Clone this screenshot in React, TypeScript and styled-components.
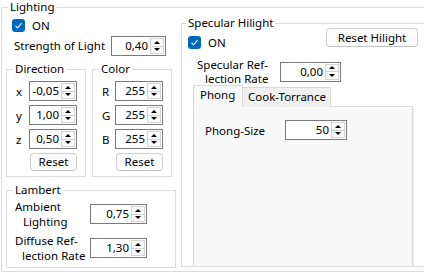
import React from 'react'
import styled, { createGlobalStyle } from 'styled-components'

const GlobalStyle = createGlobalStyle`
  html, body {
    margin: 0;
    padding: 0;
    background: #fff;
    overflow: hidden;
  }
  body {
    font-family: "Segoe UI", "Noto Sans", sans-serif;
    font-size: 11.5px;
    line-height: 15px;
    color: #000;
  }
`

const GroupBox = styled.fieldset<{ $w?: number; $h: number }>`
  box-sizing: border-box;
  margin: 0;
  padding: 0;
  min-width: 0;
  border: 1px solid #dcdcdc;
  width: ${p => (p.$w ? `${p.$w}px` : 'auto')};
  height: ${p => p.$h}px;
`

const Legend = styled.legend<{ $indent?: number }>`
  margin-left: ${p => p.$indent ?? 6}px;
  padding: 0 2px;
  height: 14px;
  line-height: 14px;
`

const Outer = styled(GroupBox)`
  margin-left: 1px;
`

const OuterBody = styled.div`
  display: grid;
  grid-template-columns: 170px 1fr;
  column-gap: 5px;
  padding: 0 2px 0 4px;
`

const LeftCol = styled.div`
  display: flex;
  flex-direction: column;
`

const CheckRow = styled.label<{ $top: number; $left: number }>`
  display: flex;
  align-items: center;
  gap: 7px;
  height: 15px;
  margin-top: ${p => p.$top}px;
  margin-left: ${p => p.$left}px;
`

const CheckMark = styled.span`
  display: inline-flex;
  align-items: center;
  justify-content: center;
  width: 13px;
  height: 13px;
  border-radius: 3px;
  background: #0067c0;
`

const FieldRow = styled.div<{ $cols: string; $top: number; $left: number }>`
  display: grid;
  grid-template-columns: ${p => p.$cols};
  align-items: center;
  margin-top: ${p => p.$top}px;
  padding-left: ${p => p.$left}px;
`

const Caption = styled.span<{ $dy?: number }>`
  white-space: nowrap;
  margin-top: ${p => p.$dy ?? 0}px;
`

const TwoLine = styled.span<{ $lh?: number; $dy?: number }>`
  display: flex;
  flex-direction: column;
  line-height: ${p => p.$lh ?? 15}px;
  margin-top: ${p => p.$dy ?? 0}px;
  white-space: nowrap;
`

const Line = styled.span<{ $indent?: number }>`
  padding-left: ${p => p.$indent ?? 0}px;
`

const Pair = styled.div`
  display: flex;
  gap: 6px;
  margin-top: 6px;
`

const AxisGrid = styled.div`
  display: grid;
  grid-template-columns: 13px 48px;
  row-gap: 4px;
  align-items: center;
  padding: 5px 0 0 9px;
`

const LambertGrid = styled.div`
  display: grid;
  grid-template-columns: 75px 57px;
  row-gap: 4px;
  align-items: center;
  padding: 2px 0 0 8px;
`

const SpinBox = styled.div<{ $w: number }>`
  box-sizing: border-box;
  display: flex;
  width: ${p => p.$w}px;
  height: 20px;
  border: 1px solid #7a7a7a;
  background: #fff;
`

const SpinValue = styled.span`
  flex: 1;
  text-align: right;
  line-height: 17px;
  padding-right: 2px;
`

const SpinButtons = styled.div`
  display: flex;
  flex-direction: column;
  width: 14px;
  margin: 1px 1px 1px 0;
`

const SpinArrow = styled.span<{ $down?: boolean }>`
  flex: 1;
  display: flex;
  align-items: center;
  justify-content: center;
  box-sizing: border-box;
  border: 1px solid #d4d4d4;
  background: #fbfbfb;
  ${p => (p.$down ? 'border-top: none;' : '')}
  &::after {
    content: '';
    border-left: 3px solid transparent;
    border-right: 3px solid transparent;
    ${p => (p.$down ? 'border-top: 3px solid #000;' : 'border-bottom: 3px solid #000;')}
  }
`

const Button = styled.button<{ $w: number; $h: number; $left?: number }>`
  box-sizing: border-box;
  width: ${p => p.$w}px;
  height: ${p => p.$h}px;
  margin-left: ${p => p.$left ?? 0}px;
  padding: 0;
  border: 1px solid #d0d0d0;
  border-bottom-color: #c2c2c2;
  border-radius: 4px;
  background: #fdfdfd;
  font: inherit;
  line-height: 1;
  color: #000;
`

const Specular = styled(GroupBox)`
  margin-top: 2px;
`

const SpecBody = styled.div`
  display: flex;
  flex-direction: column;
  padding-left: 6px;
`

const SpecTop = styled.div`
  display: flex;
  justify-content: space-between;
  align-items: flex-start;
  margin-top: -2px;
  padding-right: 11px;
`

const TabStrip = styled.div`
  display: flex;
  align-items: flex-end;
  height: 22px;
  margin: -1px 0 0 5px;
`

const Tab = styled.div<{ $active?: boolean; $w: number }>`
  box-sizing: border-box;
  width: ${p => p.$w}px;
  height: ${p => (p.$active ? 22 : 20)}px;
  padding-left: ${p => (p.$active ? 6 : 5)}px;
  line-height: ${p => (p.$active ? 18 : 17)}px;
  border: 1px solid #d9d9d9;
  border-bottom: none;
  ${p => (p.$active ? '' : 'border-left: none;')}
  background: ${p => (p.$active ? '#f9f9f9' : '#f0f0f0')};
  position: ${p => (p.$active ? 'relative' : 'static')};
  z-index: ${p => (p.$active ? 1 : 0)};
  white-space: nowrap;
`

const TabPanel = styled.div`
  box-sizing: border-box;
  width: 220px;
  height: 161px;
  margin: -1px 0 0 5px;
  padding: 13px 0 0 11px;
  border: 1px solid #d9d9d9;
  background: #f9f9f9;
  box-shadow: 1px 0 0 #eeeeee;
`

const Spin = ({ value, w }: { value: string; w: number }) => (
  <SpinBox $w={w}>
    <SpinValue>{value}</SpinValue>
    <SpinButtons>
      <SpinArrow />
      <SpinArrow $down />
    </SpinButtons>
  </SpinBox>
)

const Check = ({ top, left }: { top: number; left: number }) => (
  <CheckRow $top={top} $left={left}>
    <CheckMark>
      <svg width="9" height="9" viewBox="0 0 9 9">
        <path d="M1.5 4.8 L3.6 6.8 L7.6 2.2" fill="none" stroke="#fff" strokeWidth="1.1" />
      </svg>
    </CheckMark>
    ON
  </CheckRow>
)

const axes = [
  ['x', '-0,05'],
  ['y', '1,00'],
  ['z', '0,50'],
]

const rgb = [
  ['R', '255'],
  ['G', '255'],
  ['B', '255'],
]

const AxisGroup = ({ title, rows }: { title: string; rows: string[][] }) => (
  <GroupBox $w={80} $h={115}>
    <Legend>{title}</Legend>
    <AxisGrid>
      {rows.map(([k, v]) => (
        <React.Fragment key={k}>
          <span>{k}</span>
          <Spin value={v} w={48} />
        </React.Fragment>
      ))}
      <span />
      <Button $w={47} $h={18} $left={1}>Reset</Button>
    </AxisGrid>
  </GroupBox>
)

export default function App() {
  return (
    <>
      <GlobalStyle />
      <Outer $w={432} $h={272}>
        <Legend>Lighting</Legend>
        <OuterBody>
          <LeftCol>
            <Check top={4} left={6} />
            <FieldRow $cols="97px 55px" $top={3} $left={8}>
              <Caption $dy={-2}>Strength of Light</Caption>
              <Spin value="0,40" w={55} />
            </FieldRow>
            <Pair>
              <AxisGroup title="Direction" rows={axes} />
              <AxisGroup title="Color" rows={rgb} />
            </Pair>
            <GroupBox $w={170} $h={85} style={{ marginTop: 6 }}>
              <Legend>Lambert</Legend>
              <LambertGrid>
                <TwoLine>
                  <Line>Ambient</Line>
                  <Line $indent={8}>Lighting</Line>
                </TwoLine>
                <Spin value="0,75" w={57} />
                <TwoLine>
                  <Line>Diffuse Ref-</Line>
                  <Line $indent={7}>lection Rate</Line>
                </TwoLine>
                <Spin value="1,30" w={57} />
              </LambertGrid>
            </GroupBox>
          </LeftCol>
          <Specular $h={251}>
            <Legend $indent={4}>Specular Hilight</Legend>
            <SpecBody>
              <SpecTop>
                <Check top={7} left={0} />
                <Button $w={92} $h={19}>Reset Hilight</Button>
              </SpecTop>
              <FieldRow $cols="83px 61px" $top={7} $left={9}>
                <TwoLine $lh={14} $dy={1}>
                  <Line>Specular Ref-</Line>
                  <Line $indent={8}>lection Rate</Line>
                </TwoLine>
                <Spin value="0,00" w={61} />
              </FieldRow>
              <TabStrip>
                <Tab $active $w={50}>Phong</Tab>
                <Tab $w={88}>Cook-Torrance</Tab>
              </TabStrip>
              <TabPanel>
                <FieldRow $cols="80px 62px" $top={0} $left={0}>
                  <Caption>Phong-Size</Caption>
                  <Spin value="50" w={62} />
                </FieldRow>
              </TabPanel>
            </SpecBody>
          </Specular>
        </OuterBody>
      </Outer>
    </>
  )
}
